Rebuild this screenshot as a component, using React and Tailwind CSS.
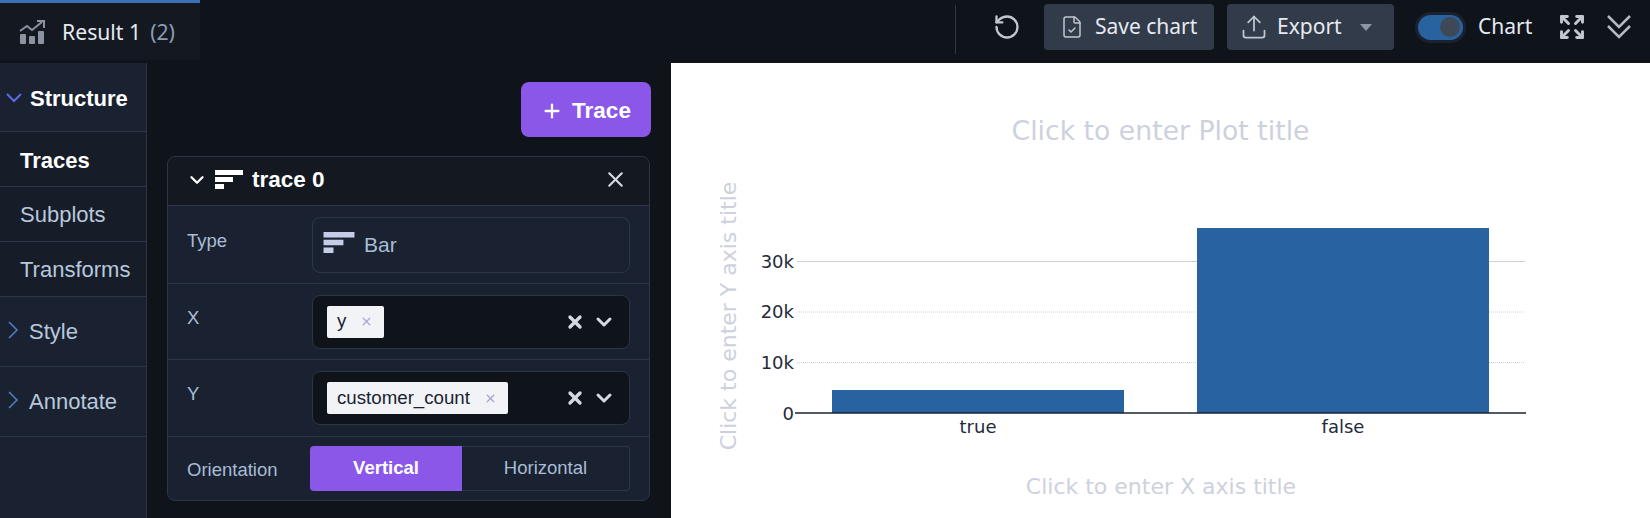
import React from 'react';
import { RotateCcw, FileCheck, Upload, ChevronDown, X, Plus, Expand } from 'lucide-react';

const BarIcon = ({ className }) => (
  <svg viewBox="0 0 28 19" className={className} fill="currentColor">
    <rect x="0" y="0" width="28" height="5" />
    <rect x="0" y="7" width="18" height="5" />
    <rect x="0" y="14" width="9" height="5" />
  </svg>
);

const ResultIcon = () => (
  <svg viewBox="0 0 26 24" className="w-[26px] h-[24px] text-[#8b93a1]" fill="currentColor">
    <rect x="1" y="14" width="6" height="10" rx="1" />
    <rect x="10" y="16" width="6" height="8" rx="1" />
    <rect x="19" y="11" width="6" height="13" rx="1" />
    <path d="M1 11 L8 6 L13 10 L23 2" fill="none" stroke="currentColor" strokeWidth="2" />
    <path d="M18 1 H25 V8" fill="none" stroke="currentColor" strokeWidth="2" />
  </svg>
);

const DoubleChevron = () => (
  <svg viewBox="0 0 26 26" className="w-[26px] h-[26px] ml-[20px] mr-[18px] text-[#b4b9c2]" fill="none" stroke="currentColor" strokeWidth="2.5">
    <path d="M2 2 L13 13 L24 2" />
    <path d="M2 12 L13 23 L24 12" />
  </svg>
);

const SideChevron = () => (
  <svg viewBox="0 0 12 18" className="w-[12px] h-[18px] mr-[10px] -mt-1 text-[#4d83c4]" fill="none" stroke="currentColor" strokeWidth="1.5">
    <path d="M2 1 L10 9 L2 17" />
  </svg>
);

const Chip = ({ label }) => (
  <div className="flex items-center h-8 bg-[#f1f3f6] rounded-[2px] pl-[10px] pr-[11px] text-[#1a2231] text-[18.7px]">
    <span>{label}</span>
    <X className="w-[13px] h-[13px] ml-[14px] text-[#a9a9d6]" strokeWidth={2.5} />
  </div>
);

const MultiSelect = ({ label }) => (
  <div className="flex items-center w-[318px] h-[54px] bg-[#0f141b] border border-[#2c3647] rounded-lg pl-[14px] pr-[13px]">
    <Chip label={label} />
    <X className="w-[20px] h-[20px] ml-auto text-[#d5d9e0]" strokeWidth={4} />
    <ChevronDown className="w-[24px] h-[24px] ml-[7px] text-[#d5d9e0]" strokeWidth={3} />
  </div>
);

const Row = ({ label, children, className }) => (
  <div className={`flex items-center border-b border-[#2c3647] pl-[19px] ${className}`}>
    <div className="w-[125px] text-[#a9bcd6] text-[18.5px] -mt-2">{label}</div>
    {children}
  </div>
);

const SubItem = ({ label, active }) => (
  <div className={`flex items-center h-[55px] pl-5 border-b border-[#2c3647] text-[22px] ${active ? 'pt-[2px] text-white font-bold' : 'text-[#b8c8dc]'}`}>
    {label}
  </div>
);

const Section = ({ label }) => (
  <div className="flex items-center h-[70px] pl-[7px] border-b border-[#2c3647] text-[#b8c8dc] text-[22px]">
    <SideChevron />
    {label}
  </div>
);

const PlotChart = () => (
  <svg viewBox="671 63 979 455" className="w-full h-full" style={{ fontFamily: '"DejaVu Sans", sans-serif' }}>
    <text x="1160.5" y="140" textAnchor="middle" fontSize="26.7" fill="#cdd1de">Click to enter Plot title</text>
    <text x="1161" y="494" textAnchor="middle" fontSize="22" fill="#cdd1de">Click to enter X axis title</text>
    <text x="0" y="0" textAnchor="middle" fontSize="22" fill="#cdd1de" transform="translate(736 316) rotate(-90)">Click to enter Y axis title</text>

    <line x1="797" x2="1525" y1="261.5" y2="261.5" stroke="#ccd0dd" />
    <line x1="797" x2="1525" y1="312" y2="312" stroke="#ccd0dd" strokeDasharray="1 1" />
    <line x1="797" x2="1525" y1="362.5" y2="362.5" stroke="#ccd0dd" strokeDasharray="1 1" />

    <rect x="832" y="390" width="292" height="23" fill="#28629f" />
    <rect x="1197" y="228" width="292" height="185" fill="#28629f" />
    <line x1="795" x2="1526" y1="413" y2="413" stroke="#1a2333" strokeWidth="1.5" />

    <g fontSize="18" fill="#1f2a3c" textAnchor="end">
      <text x="794" y="268">30k</text>
      <text x="794" y="318">20k</text>
      <text x="794" y="369">10k</text>
      <text x="794" y="420">0</text>
    </g>
    <g fontSize="18" fill="#1f2a3c" textAnchor="middle">
      <text x="978" y="433">true</text>
      <text x="1343" y="433">false</text>
    </g>
  </svg>
);

export default function App() {
  return (
    <div className="flex flex-col h-screen bg-[#0f141b] overflow-hidden font-['Liberation_Sans',sans-serif]">
      {/* Top bar */}
      <div className="flex items-start h-[63px] shrink-0">
        <div className="flex items-center w-[200px] h-[60px] bg-[#131821] border-t-[3px] border-[#3b6fb8] pl-[19px] font-['Noto_Sans',sans-serif] text-[21.2px]">
          <ResultIcon />
          <span className="ml-[17px] text-[#e6eaf0]">Result 1</span>
          <span className="ml-[9px] text-[#8d9bb3]">(2)</span>
        </div>

        <div className="flex items-center ml-auto h-[50px] mt-[2px] font-['Noto_Sans',sans-serif] text-[21px] text-[#e6eaf0]">
          <div className="w-px h-[49px] mt-1 bg-[#2c3647]" />
          <RotateCcw className="w-[28px] h-[28px] ml-[37px] text-[#c2c7cf]" strokeWidth={2} />
          <div className="flex items-center w-[170px] h-[46px] ml-[23px] bg-[#323b4a] rounded pl-[16px]">
            <FileCheck className="w-[24px] h-[28px] text-[#c2c7cf]" strokeWidth={1.5} />
            <span className="ml-[11px]">Save chart</span>
          </div>
          <div className="flex items-center w-[167px] h-[46px] ml-[13px] bg-[#323b4a] rounded pl-[13px]">
            <Upload className="w-[28px] h-[28px] text-[#c2c7cf]" strokeWidth={1.5} />
            <span className="ml-[9px]">Export</span>
            <span className="ml-[18px] w-0 h-0 border-x-[6px] border-x-transparent border-t-[7px] border-t-[#8f96a3]" />
          </div>
          <div className="flex items-center w-[45px] h-[25px] ml-[24px] bg-[#28629f] rounded-full ring-[3px] ring-[#1a2231] justify-end pr-[3px]">
            <div className="w-[20px] h-[20px] rounded-full bg-[#3f4856]" />
          </div>
          <span className="w-[54px] ml-[15px]">Chart</span>
          <Expand className="w-[28px] h-[28px] ml-[26px] text-[#c2c7cf]" strokeWidth={2.5} />
          <DoubleChevron />
        </div>
      </div>

      <div className="flex flex-1 min-h-0">
        {/* Left sidebar */}
        <div className="w-[147px] shrink-0 bg-[#161d29] border-r border-[#2c3647]">
          <div className="flex items-center h-[69px] pl-[6px] pt-[2px] bg-[#1a2231] border-b border-[#2c3647] text-white font-bold text-[22px]">
            <svg viewBox="0 0 16 10" className="w-[16px] h-[10px] mr-[8px] text-[#5b6be0]" fill="none" stroke="currentColor" strokeWidth="2">
              <path d="M1 1 L8 8 L15 1" />
            </svg>
            Structure
          </div>
          <SubItem label="Traces" active />
          <SubItem label="Subplots" />
          <SubItem label="Transforms" />
          <div className="bg-[#1a2231] h-full">
            <Section label="Style" />
            <Section label="Annotate" />
          </div>
        </div>

        {/* Trace editor */}
        <div className="flex flex-col w-[524px] shrink-0 pt-[19px] pl-5 pr-5">
          <button className="flex items-center justify-center self-end w-[130px] h-[55px] pt-[3px] rounded-lg bg-[#8b57e8] text-white font-bold text-[22.5px]">
            <Plus className="w-[22px] h-[22px] mr-[9px]" strokeWidth={2.5} />
            Trace
          </button>

          <div className="mt-[19px] mr-px h-[345px] bg-[#1a2231] border border-[#2c3647] rounded-lg overflow-hidden">
            <div className="flex items-center h-[49px] pb-[3px] bg-[#131821] border-b border-[#2c3647] pl-[18px] pr-[21px]">
              <ChevronDown className="w-[22px] h-[22px] text-white" strokeWidth={2.5} />
              <BarIcon className="w-[28px] h-[19px] ml-[7px] text-white" />
              <span className="ml-[9px] text-white font-bold text-[22.5px]">trace 0</span>
              <X className="w-[25px] h-[25px] ml-auto text-[#d5d9e0]" strokeWidth={2} />
            </div>

            <Row label="Type" className="h-[78px]">
              <div className="flex items-center w-[318px] h-[56px] border border-[#2c3647] rounded-lg pl-[10px] text-[#a9bcd6] text-[21px]">
                <BarIcon className="w-[32px] h-[21px] -mt-1 text-[#c5cce8]" />
                <span className="ml-[9px]">Bar</span>
              </div>
            </Row>
            <Row label="X" className="h-[76px]">
              <MultiSelect label="y" />
            </Row>
            <Row label="Y" className="h-[77px]">
              <MultiSelect label="customer_count" />
            </Row>
            <div className="flex items-center h-[64px] pl-[19px]">
              <div className="w-[123px] mt-[2px] text-[#a9bcd6] text-[18.5px]">Orientation</div>
              <div className="flex h-[45px] w-[320px] text-[18.5px] -mt-[2px]">
                <div className="flex items-center justify-center w-[152px] bg-[#8b57e8] text-white font-bold rounded-l">Vertical</div>
                <div className="flex items-center justify-center flex-1 border border-l-0 border-[#2c3647] rounded-r text-[#a9bcd6]">Horizontal</div>
              </div>
            </div>
          </div>
        </div>

        {/* Chart */}
        <div className="flex-1 min-w-0 bg-white">
          <PlotChart />
        </div>
      </div>
    </div>
  );
}
